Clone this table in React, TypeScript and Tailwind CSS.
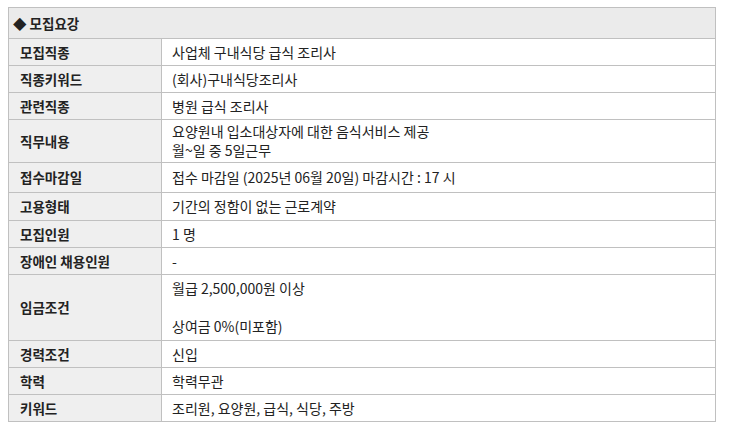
const rows: { label: string; value: React.ReactNode; h: string }[] = [
  { label: "모집직종", value: "사업체 구내식당 급식 조리사", h: "h-[27px]" },
  { label: "직종키워드", value: "(회사)구내식당조리사", h: "h-[27px]" },
  { label: "관련직종", value: "병원 급식 조리사", h: "h-[27px]" },
  {
    label: "직무내용",
    value: (
      <>
        요양원내 입소대상자에 대한 음식서비스 제공
        <br />
        월~일 중 5일근무
      </>
    ),
    h: "h-[43px]",
  },
  { label: "접수마감일", value: "접수 마감일 (2025년 06월 20일) 마감시간 : 17 시", h: "h-[30px]" },
  { label: "고용형태", value: "기간의 정함이 없는 근로계약", h: "h-[28px]" },
  { label: "모집인원", value: "1 명", h: "h-[27px]" },
  { label: "장애인 채용인원", value: "-", h: "h-[27px]" },
  {
    label: "임금조건",
    value: (
      <>
        월급 2,500,000원 이상
        <br />
        <br />
        상여금 0%(미포함)
      </>
    ),
    h: "h-[66px]",
  },
  { label: "경력조건", value: "신입", h: "h-[27px]" },
  { label: "학력", value: "학력무관", h: "h-[27px]" },
  { label: "키워드", value: "조리원, 요양원, 급식, 식당, 주방", h: "h-[27px]" },
];

export default function App() {
  return (
    <div className="bg-white w-[729px] h-[430px] pt-[7px] pl-[8px] font-['Noto_Sans_CJK_KR','Liberation_Sans',sans-serif] text-[14px] text-[#222]">
      <table className="w-[708px] border-collapse border border-[#c0c0c0]">
        <thead>
          <tr className="h-[31px] bg-[#ebebeb]">
            <th colSpan={2} className="text-left font-bold pl-[4px] border border-[#c0c0c0] text-[13.5px]">
              ◆ 모집요강
            </th>
          </tr>
        </thead>
        <tbody>
          {rows.map((r) => (
            <tr key={r.label} className={r.h}>
              <th className="w-[153px] bg-[#efefef] text-left font-bold pl-[11px] border border-[#c0c0c0] align-middle text-[13.5px]">
                {r.label}
              </th>
              <td className="pl-[10px] leading-[19px] border border-[#c0c0c0] align-middle">
                {r.value}
              </td>
            </tr>
          ))}
        </tbody>
      </table>
    </div>
  );
}
